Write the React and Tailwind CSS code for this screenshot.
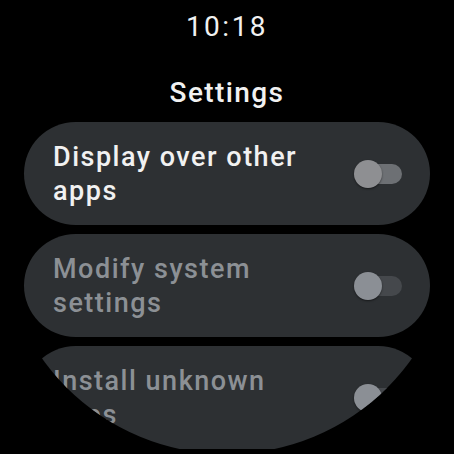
const filas = [
  { texto: "Display over other apps", activo: true },
  { texto: "Modify system settings", activo: false },
  { texto: "Install unknown apps", activo: false },
];

// Interruptor apagado estilo Wear OS
function Interruptor({ activo }) {
  return (
    <div className="relative w-[48px] h-[28px] shrink-0 flex items-center">
      <div className={`absolute right-0 w-[42px] h-[20px] rounded-full ${activo ? "bg-[#6d7074]" : "bg-[#45484c]"}`} />
      <div className={`absolute left-0 w-[28px] h-[28px] rounded-full shadow-[0_1px_2px_rgba(0,0,0,0.5)] ${activo ? "bg-[#8e8f92]" : "bg-[#8b8f95]"}`} />
    </div>
  );
}

export default function App() {
  return (
    <div className="w-[454px] h-[454px] bg-black overflow-hidden" style={{ fontFamily: "Roboto, 'Noto Sans', sans-serif" }}>
      <div className="w-full h-full rounded-full overflow-hidden flex flex-col items-center">
        <div className="mt-[10px] h-[34px] flex items-center text-[28px] text-[#f1f1f1] tracking-[2.5px]">10:18</div>
        <div className="mt-[32px] h-[34px] flex items-center text-[28px] font-medium text-[#f1f1f1] tracking-[1.4px]">Settings</div>
        <div className="mt-[12px] flex flex-col gap-[9px] w-[406px]">
          {filas.map((f) => (
            <div key={f.texto} className="h-[103px] shrink-0 rounded-full bg-[#2d3033] flex items-center justify-between pl-[29px] pr-[28px]">
              <span className={`w-[262px] text-[27px] leading-[34px] font-medium tracking-[1.5px] ${f.activo ? "text-[#f1f1f1]" : "text-[#8c9095]"}`}>{f.texto}</span>
              <Interruptor activo={f.activo} />
            </div>
          ))}
        </div>
      </div>
    </div>
  );
}
